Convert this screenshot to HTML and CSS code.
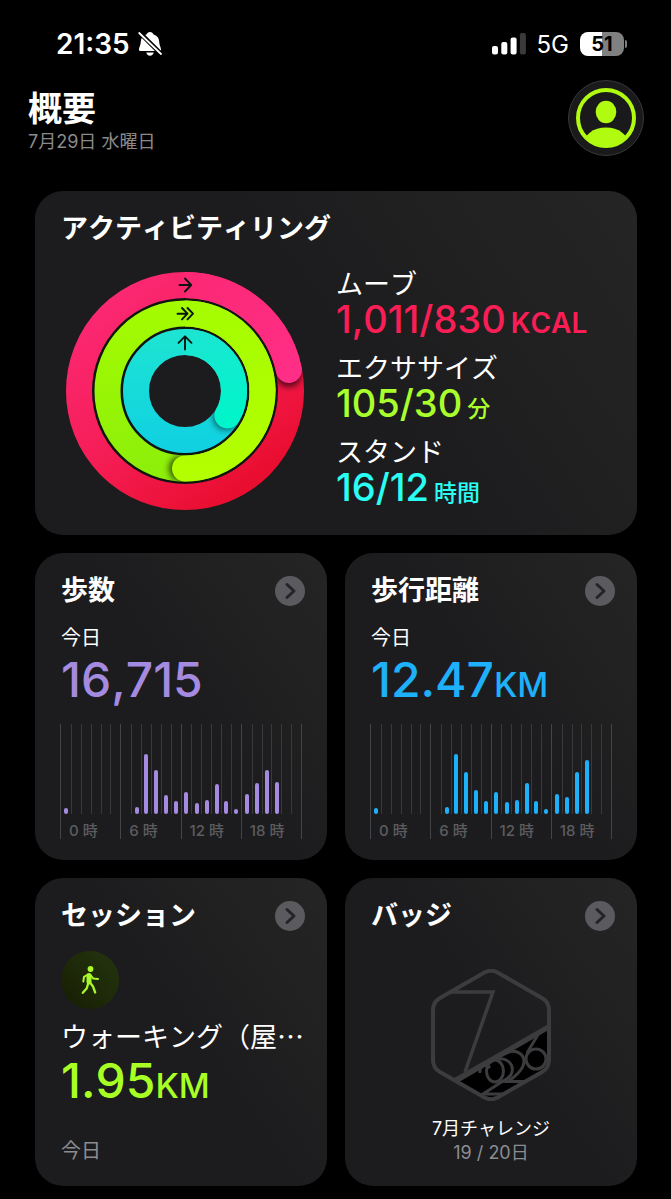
FILE: index.html
```html
<!DOCTYPE html>
<html lang="ja">
<head>
<meta charset="utf-8">
<meta name="viewport" content="width=device-width, initial-scale=1">
<title>概要</title>
<link rel="stylesheet" href="styles.css">
</head>
<body>
<div class="status">
  <div class="status-left">
    <span class="clock">21:35</span>
    <svg class="bell" viewBox="0 0 24 26" aria-label="消音">
      <path d="M12 1c1.900 0 3 1.200 3.300 2.300 3.700 1.200 5.700 3.900 5.900 7.200.2 4.500 1.800 5.500 1.800 8.200 0 .9-.6 1.300-1.500 1.300h-19C1.600 20 1 19.600 1 18.700c0-2.700 1.600-3.700 1.800-8.200C3 7.200 5 4.500 8.700 3.300 9 2.200 10.100 1 12 1zM8.300 21.600h7.400c-.3 2-1.800 3.200-3.700 3.200s-3.400-1.200-3.700-3.200z" fill="#fff"/>
      <path d="M0 0 24 24" stroke="#000" stroke-width="4.500"/>
      <path d="M1.200 2 23 23" stroke="#fff" stroke-width="1.800" stroke-linecap="round"/>
    </svg>
  </div>
  <div class="status-right">
    <svg class="signal" viewBox="0 0 34 22" aria-label="電波">
      <rect x="0" y="13" width="6" height="8.500" rx="2" fill="#fff"/>
      <rect x="9.300" y="9" width="6" height="12.500" rx="2" fill="#fff"/>
      <rect x="18.600" y="4.500" width="6" height="17" rx="2" fill="#fff"/>
      <rect x="27.900" y="0" width="6" height="21.500" rx="2" fill="#3a3a3a"/>
    </svg>
    <span class="network">5G</span>
    <div class="battery"><span class="battery-body">51</span><span class="battery-tip"></span></div>
  </div>
</div>

<header class="header">
  <div class="heading">
    <h1 class="title">概要</h1>
    <p class="date">7月29日 水曜日</p>
  </div>
  <button class="avatar" aria-label="プロフィール">
    <svg viewBox="0 0 60 60">
      <defs><clipPath id="face"><circle cx="30" cy="30" r="29"/></clipPath></defs>
      <circle cx="30" cy="30" r="28" fill="none" stroke="#b0fb10" stroke-width="4"/>
      <ellipse cx="30" cy="24" rx="10.300" ry="11.300" fill="#b0fb10"/>
      <ellipse cx="30" cy="57" rx="23" ry="17.500" fill="#b0fb10" clip-path="url(#face)"/>
    </svg>
  </button>
</header>

<main class="cards">
  <section class="card card-wide">
    <h2 class="card-title">アクティビティリング</h2>
    <div class="activity">
      <svg class="rings" viewBox="0 0 238 238" role="img" aria-label="アクティビティリング">
        <defs>
          <linearGradient id="r1" gradientUnits="userSpaceOnUse" x1="60" y1="10" x2="200" y2="200"><stop offset="0" stop-color="#fb2873"/><stop offset=".5" stop-color="#f61e58"/><stop offset="1" stop-color="#e90e2f"/></linearGradient>
          <linearGradient id="r2" gradientUnits="userSpaceOnUse" x1="119" y1="0" x2="225" y2="100"><stop offset="0" stop-color="#fb2873"/><stop offset="1" stop-color="#ff2e86"/></linearGradient>
          <linearGradient id="g1" gradientUnits="userSpaceOnUse" x1="119" y1="30" x2="119" y2="208"><stop offset="0" stop-color="#a5fc00"/><stop offset="1" stop-color="#8cee0a"/></linearGradient>
          <linearGradient id="g2" gradientUnits="userSpaceOnUse" x1="119" y1="30" x2="119" y2="208"><stop offset="0" stop-color="#a5fc00"/><stop offset="1" stop-color="#b4ff00"/></linearGradient>
          <linearGradient id="b1" gradientUnits="userSpaceOnUse" x1="119" y1="60" x2="119" y2="180"><stop offset="0" stop-color="#1de4d2"/><stop offset="1" stop-color="#10d0e2"/></linearGradient>
          <linearGradient id="b2" gradientUnits="userSpaceOnUse" x1="119" y1="60" x2="160" y2="150"><stop offset="0" stop-color="#1de4d2"/><stop offset="1" stop-color="#00f5ca"/></linearGradient>
          <filter id="soft" x="-50%" y="-50%" width="200%" height="200%"><feGaussianBlur stdDeviation="3"/></filter>
          <clipPath id="c1"><path clip-rule="evenodd" d="M0 119a119 119 0 1 0 238 0a119 119 0 1 0-238 0zM26 119a93 93 0 1 0 186 0a93 93 0 1 0-186 0z"/></clipPath>
          <clipPath id="c2"><path clip-rule="evenodd" d="M28.500 119a90.500 90.500 0 1 0 181 0a90.500 90.500 0 1 0-181 0zM54.500 119a64.500 64.500 0 1 0 129 0a64.500 64.500 0 1 0-129 0z"/></clipPath>
          <clipPath id="c3"><path clip-rule="evenodd" d="M57 119a62 62 0 1 0 124 0a62 62 0 1 0-124 0zM83 119a36 36 0 1 0 72 0a36 36 0 1 0-72 0z"/></clipPath>
        </defs>
        <g fill="none" stroke-width="26">
          <circle cx="119" cy="119" r="91.500" stroke="#111512" stroke-width="5"/>
          <circle cx="119" cy="119" r="63" stroke="#111512" stroke-width="5"/>
          <circle cx="119" cy="119" r="106" stroke="url(#r1)"/>
          <circle cx="119" cy="119" r="77.500" stroke="url(#g1)"/>
          <circle cx="119" cy="119" r="49" stroke="url(#b1)"/>
        </g>
        <g clip-path="url(#c1)"><circle cx="222.500" cy="102" r="13" fill="#000" opacity=".65" filter="url(#soft)"/></g>
        <g clip-path="url(#c2)"><circle cx="116" cy="196.500" r="13" fill="#000" opacity=".65" filter="url(#soft)"/></g>
        <g clip-path="url(#c3)"><circle cx="160" cy="145" r="13" fill="#000" opacity=".55" filter="url(#soft)"/></g>
        <g fill="none" stroke-width="26">
          <path d="M119 13A106 106 0 0 1 208.900 62.800" stroke="url(#r2)"/>
          <path d="M207 59.800A106 106 0 0 1 222.900 97.900" stroke="url(#r2)" stroke-linecap="round"/>
          <path d="M119 41.500A77.500 77.500 0 0 1 196.500 119" stroke="url(#g2)"/>
          <path d="M196.500 118A77.500 77.500 0 0 1 119 196.500" stroke="url(#g2)" stroke-linecap="round"/>
          <path d="M119 70A49 49 0 0 1 168 119" stroke="url(#b2)"/>
          <path d="M168 118A49 49 0 0 1 161.400 143.500" stroke="url(#b2)" stroke-linecap="round"/>
        </g>
        <g fill="none" stroke="#0b1510" stroke-width="1.900" stroke-linecap="round" stroke-linejoin="round">
          <path d="M113.500 13h11.500M119 6.500l6.200 6.500-6.200 6.500"/>
          <path d="M111.500 41.700h9.500M116 36l5.500 5.700-5.500 5.700M121.500 36l5.500 5.700-5.500 5.700"/>
          <path d="M119 77.500v-13M112.500 70.800l6.500-6.500 6.500 6.500"/>
        </g>
      </svg>
      <dl class="stats">
        <div><dt>ムーブ</dt><dd class="move">1,011/830<span class="unit">KCAL</span></dd></div>
        <div><dt>エクササイズ</dt><dd class="exercise">105/30<span class="unit unit-kanji">分</span></dd></div>
        <div><dt>スタンド</dt><dd class="stand">16/12<span class="unit unit-kanji">時間</span></dd></div>
      </dl>
    </div>
  </section>

  <section class="card">
    <div class="card-head"><h2 class="card-title">歩数</h2>
      <button class="more" aria-label="歩数を表示"><svg viewBox="0 0 30 30"><path d="M12 8.500l7 6.500-7 6.500"/></svg></button></div>
    <p class="when">今日</p>
    <p class="value steps">16,715</p>
    <div class="chart steps">
      <div class="block"><div class="hours"><i><b style="height:6px"></b></i><i></i><i></i><i></i><i></i><i></i></div><span>0 時</span></div>
      <div class="block"><div class="hours"><i></i><i><b style="height:7px"></b></i><i><b style="height:60px"></b></i><i><b style="height:44px"></b></i><i><b style="height:19px"></b></i><i><b style="height:13px"></b></i></div><span>6 時</span></div>
      <div class="block"><div class="hours"><i><b style="height:22px"></b></i><i><b style="height:11px"></b></i><i><b style="height:14px"></b></i><i><b style="height:30px"></b></i><i><b style="height:13px"></b></i><i><b style="height:5px"></b></i></div><span>12 時</span></div>
      <div class="block"><div class="hours"><i><b style="height:20px"></b></i><i><b style="height:31px"></b></i><i><b style="height:44px"></b></i><i><b style="height:32px"></b></i><i></i><i></i></div><span>18 時</span></div>
    </div>
  </section>

  <section class="card">
    <div class="card-head"><h2 class="card-title">歩行距離</h2>
      <button class="more" aria-label="歩行距離を表示"><svg viewBox="0 0 30 30"><path d="M12 8.500l7 6.500-7 6.500"/></svg></button></div>
    <p class="when">今日</p>
    <p class="value distance">12.47<span class="km">KM</span></p>
    <div class="chart distance">
      <div class="block"><div class="hours"><i><b style="height:6px"></b></i><i></i><i></i><i></i><i></i><i></i></div><span>0 時</span></div>
      <div class="block"><div class="hours"><i></i><i><b style="height:7px"></b></i><i><b style="height:60px"></b></i><i><b style="height:42px"></b></i><i><b style="height:24px"></b></i><i><b style="height:13px"></b></i></div><span>6 時</span></div>
      <div class="block"><div class="hours"><i><b style="height:22px"></b></i><i><b style="height:12px"></b></i><i><b style="height:14px"></b></i><i><b style="height:31px"></b></i><i><b style="height:13px"></b></i><i><b style="height:5px"></b></i></div><span>12 時</span></div>
      <div class="block"><div class="hours"><i><b style="height:20px"></b></i><i><b style="height:17px"></b></i><i><b style="height:42px"></b></i><i><b style="height:54px"></b></i><i></i><i></i></div><span>18 時</span></div>
    </div>
  </section>

  <section class="card">
    <div class="card-head"><h2 class="card-title">セッション</h2>
      <button class="more" aria-label="セッションを表示"><svg viewBox="0 0 30 30"><path d="M12 8.500l7 6.500-7 6.500"/></svg></button></div>
    <div class="workout-icon">
      <svg viewBox="0 0 58 58" fill="none" stroke="#a8f82c" stroke-linecap="round" stroke-linejoin="round">
        <circle cx="29.500" cy="18" r="2.900" fill="#a8f82c" stroke="none"/>
        <path d="M28 24.500v6.500" stroke-width="5"/>
        <path d="M27 23.500l-4 2.300-.7 4.700M29.500 24l2.800 3.600 4.700.3" stroke-width="2"/>
        <path d="M29 31.500l3 4 2.200 6M27 33l-1.200 4.200-4 4.600" stroke-width="2.300"/>
      </svg>
    </div>
    <p class="workout-name">ウォーキング（屋…</p>
    <p class="value workout">1.95<span class="km">KM</span></p>
    <p class="workout-day">今日</p>
  </section>

  <section class="card">
    <div class="card-head"><h2 class="card-title">バッジ</h2>
      <button class="more" aria-label="バッジを表示"><svg viewBox="0 0 30 30"><path d="M12 8.500l7 6.500-7 6.500"/></svg></button></div>
    <div class="award">
      <svg class="hex" viewBox="0 0 120 132" fill="none" stroke="#3c3c3e" stroke-width="4">
        <defs><clipPath id="hexclip"><path d="M53.500 3.500Q60 0 66.500 3.500L111 29Q118 33 118 41V91Q118 99 111 103L66.500 128.500Q60 132 53.500 128.500L9 103Q2 99 2 91V41Q2 33 9 29Z"/></clipPath></defs>
        <g clip-path="url(#hexclip)">
          <path d="M22 112 120 56V132H40z" fill="#000"/>
          <path d="M18 23H62L34 103" stroke-width="3.500"/>
          <g stroke-width="3">
            <path d="M49 104C48 96 55 94 59 99"/>
            <ellipse cx="64" cy="102" rx="8.500" ry="11"/>
            <path d="M64 91C74 87 83 94 81 103 80 108 76 110 72 112L52 125H76"/>
            <path d="M74 85C85 78 96 86 92 97 90 102 86 106 78 112"/>
            <path d="M68 112.500H96"/>
            <path d="M108 64 96 84"/>
            <circle cx="105" cy="90" r="10"/>
          </g>
        </g>
        <path d="M24 113 117 59"/>
        <path d="M53.500 3.500Q60 0 66.500 3.500L111 29Q118 33 118 41V91Q118 99 111 103L66.500 128.500Q60 132 53.500 128.500L9 103Q2 99 2 91V41Q2 33 9 29Z"/>
      </svg>
      <p class="award-name">7月チャレンジ</p>
      <p class="award-progress">19 / 20日</p>
    </div>
  </section>
</main>
</body>
</html>
```
FILE: styles.css
```css
* { box-sizing: border-box; }

body {
  margin: 0;
  background: #000;
  color: #fff;
  font-family: Inter, "Noto Sans CJK JP", sans-serif;
  font-kerning: none;
}

h1, h2, p, dl, dd { margin: 0; }

button {
  padding: 0;
  border: 0;
  cursor: pointer;
}

svg { display: block; }

.status {
  display: flex;
  justify-content: space-between;
  align-items: center;
  height: 80px;
  padding: 8px 44px 0 56px;
}

.status-left, .status-right {
  display: flex;
  align-items: center;
}

.status-left { gap: 8px; }
.clock { font-size: 28px; font-weight: 600; }
.bell { width: 24px; height: 26px; }
.signal { width: 34px; height: 22px; }
.network { margin: 0 11px; font-size: 24px; }

.battery { display: flex; align-items: center; gap: 1px; }

.battery-body {
  width: 44px;
  border-radius: 8px;
  background: linear-gradient(90deg, #fff 51%, #808080 51%);
  color: #000;
  font-size: 20px;
  font-weight: 700;
  line-height: 24px;
  text-align: center;
}

.battery-tip {
  width: 2px;
  height: 8px;
  border-radius: 0 4px 4px 0;
  background: #808080;
}

.header {
  display: flex;
  justify-content: space-between;
  align-items: center;
  padding: 0 27px 0 28px;
}

.heading { padding-top: 8px; }
.title { font-size: 34px; font-weight: 700; line-height: 40px; }
.date { color: #8a8a8a; font-size: 18px; line-height: 26px; }

.avatar {
  display: grid;
  place-items: center;
  width: 76px;
  height: 76px;
  border: 1px solid #3a3838;
  border-radius: 50%;
  background: #1a1a1c;
}

.avatar svg { width: 60px; height: 60px; }

.cards {
  display: grid;
  grid-template-columns: 1fr 1fr;
  gap: 18px;
  padding: 35px 34px 14px 35px;
}

.card {
  display: flex;
  flex-direction: column;
  min-width: 0;
  min-height: 307px;
  padding: 23px 22px 21px 26px;
  border-radius: 28px;
  background: linear-gradient(55deg, #1c1c1e 50%, #252525);
}

.card-wide { grid-column: 1 / -1; padding-bottom: 25px; }

.card-head {
  display: flex;
  justify-content: space-between;
  align-items: center;
}

.card-title { font-size: 27px; font-weight: 600; line-height: 30px; }

.more {
  width: 30px;
  height: 30px;
  border-radius: 50%;
  background: #5b5b5f;
}

.more path {
  fill: none;
  stroke: #242426;
  stroke-width: 3;
  stroke-linecap: round;
  stroke-linejoin: round;
}

.activity {
  display: flex;
  gap: 32px;
  margin-top: 25px;
}

.rings { flex: none; width: 238px; height: 238px; margin: 3px 0 0 5px; }

.stats { display: flex; flex-direction: column; gap: 16px; }
.stats dt { font-size: 27px; line-height: 32px; }

.stats dd {
  display: flex;
  align-items: baseline;
  height: 36px;
  font-size: 38px;
  font-weight: 500;
  line-height: 36px;
  white-space: nowrap;
}

.unit { margin-left: 5px; font-size: 28px; font-weight: 600; }
.unit-kanji { font-size: 23px; font-weight: 500; }
.move { color: #f91e55; }
.exercise { color: #a8ff2c; }
.stand { color: #2afdf3; }

.when { margin-top: 18px; font-size: 20px; line-height: 28px; }
.value { height: 56px; font-size: 48px; font-weight: 500; line-height: 56px; white-space: nowrap; }
.km { font-size: 34px; line-height: 34px; }
.steps { color: #a58be0; }
.distance { color: #1fb0fa; }
.workout { color: #a8ff24; }

.chart {
  display: grid;
  grid-template-columns: repeat(4, 1fr);
  margin-top: 16px;
  margin-right: 3px;
  margin-left: -1px;
  border-right: 1px solid #444446;
}

.block { border-left: 1px solid #444446; }

.hours {
  display: grid;
  grid-template-columns: repeat(6, 1fr);
  height: 90px;
}

.hours i {
  display: flex;
  justify-content: center;
  align-items: flex-end;
}

.hours i + i { border-left: 1px solid #39393b; }
.hours b { width: 4px; border-radius: 2px; background: currentColor; }

.block span {
  display: block;
  height: 25px;
  padding: 4px 0 0 8px;
  color: #5c5c5f;
  font-size: 15px;
  font-weight: 500;
  line-height: 25px;
  white-space: nowrap;
}

.workout-icon {
  width: 58px;
  height: 58px;
  margin-top: 20px;
  border-radius: 50%;
  background: linear-gradient(45deg, #171d02, #253610);
}

.workout-name {
  margin-top: 10px;
  font-family: "Noto Sans CJK JP", sans-serif;
  font-size: 27px;
  line-height: 34px;
  white-space: nowrap;
}

.workout-day { margin-top: auto; color: #8c8c91; font-size: 20px; line-height: 28px; }

.award {
  display: flex;
  flex-direction: column;
  align-items: center;
  padding-right: 4px;
  margin-top: 38px;
}

.hex { width: 120px; height: 132px; }
.award-name { margin-top: 16px; font-size: 18px; line-height: 24px; }
.award-progress { color: #8c8c91; font-size: 18px; line-height: 24px; }
```
